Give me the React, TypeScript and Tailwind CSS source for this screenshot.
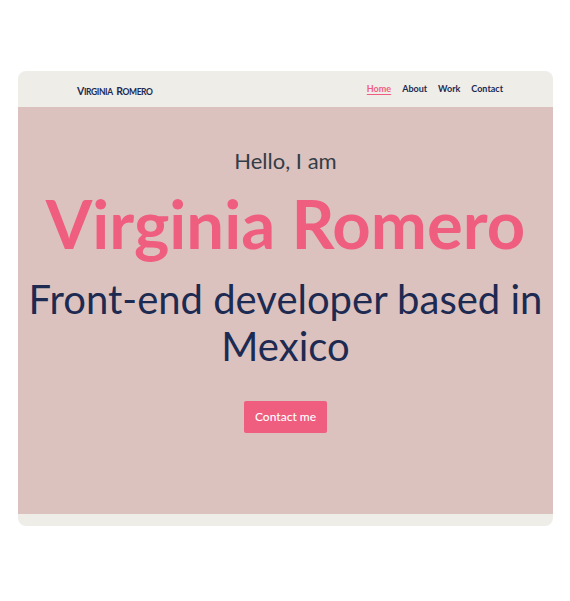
const App = () => {
  return (
    <div className="min-h-[601px] w-[570px] bg-white pt-[71px] pl-[18px] font-['Lato',sans-serif]">
      <div className="w-[535px] overflow-hidden rounded-[8px] bg-[#efede8]">
        <header className="flex h-[36px] items-center justify-between pl-[59px] pr-[50px]">
          <span className="font-bold uppercase tracking-tight text-[#1d2a52]">
            <span className="text-[10.5px]">V</span>
            <span className="text-[8.5px]">IRGINIA</span> <span className="text-[10.5px]">R</span>
            <span className="text-[8.5px]">OMERO</span>
          </span>
          <nav className="flex gap-[11px] text-[9px] font-bold text-[#1d2a52]">
            <a className="text-[#ef5d7f] underline underline-offset-2">Home</a>
            <a>About</a>
            <a>Work</a>
            <a>Contact</a>
          </nav>
        </header>
        <section className="flex h-[407px] flex-col items-center bg-[#dcc2be] pt-[34px] text-center">
          <p className="text-[22px] leading-[40px] text-[#333d47]">Hello, I am</p>
          <h1 className="mt-[2px] text-[67px] font-bold leading-[80px] text-[#ef5d7f]">
            Virginia Romero
          </h1>
          <h2 className="mt-[13px] text-[40px] leading-[47px] text-[#1d2a52]">
            Front-end developer based in Mexico
          </h2>
          <button className="mt-[31px] h-[32px] w-[83px] rounded-[2px] bg-[#ef5d7f] text-[12px] font-medium text-white">
            Contact me
          </button>
        </section>
        <div className="h-[12px]" />
      </div>
    </div>
  );
};

export default App;
